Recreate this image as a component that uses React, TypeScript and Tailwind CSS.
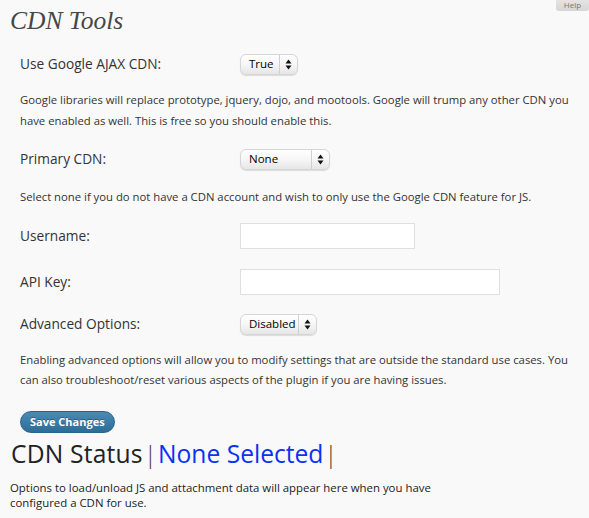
import React from "react";

const body = { fontFamily: '"Open Sans", "DejaVu Sans", sans-serif' };

const Arrows = () => (
  <svg width="7" height="11" viewBox="0 0 7 11">
    <path d="M3.5 0.5 L6.5 4.5 L0.5 4.5 Z" fill="#111" />
    <path d="M3.5 10.5 L6.5 6.5 L0.5 6.5 Z" fill="#111" />
  </svg>
);

const FakeSelect = ({ value, width }: { value: string; width: string }) => (
  <div
    className={`${width} h-[21px] flex items-center rounded-[6px] border border-[#d6d6d6] bg-gradient-to-b from-white via-[#f6f6f6] to-[#e6e6e6] shadow-[0_1px_1px_rgba(0,0,0,0.12)] text-[11.5px] text-black`}
  >
    <span className="flex-1 pl-[8px] leading-none">{value}</span>
    <span className="h-full w-[18px] border-l border-[#d0d0d0] flex items-center justify-center">
      <Arrows />
    </span>
  </div>
);

const Row = ({ label, children }: { label: string; children: React.ReactNode }) => (
  <div className="h-[42px] flex items-center">
    <div className="w-[240px] pl-[20px] text-[13.7px] text-[#333]">{label}</div>
    <div>{children}</div>
  </div>
);

export default function App() {
  return (
    <div
      className="relative w-[589px] h-[518px] bg-[#f9f9f9] overflow-hidden text-[#333]"
      style={body}
    >
      <div className="absolute top-0 right-0 w-[33px] h-[11px] rounded-b-[3px] bg-gradient-to-b from-[#e4e4e4] to-[#d6d6d6] text-[8px] leading-[10px] text-[#777] text-center">
        Help
      </div>

      <h2
        className="h-[43px] pl-[10px] pt-[3px] text-[25.5px] leading-[36px] italic text-[#464646]"
        style={{ fontFamily: '"Liberation Serif", "DejaVu Serif", serif' }}
      >
        CDN Tools
      </h2>

      <Row label="Use Google AJAX CDN:">
        <FakeSelect value="True" width="w-[58px]" />
      </Row>
      <p className="mt-[4px] px-[20px] text-[11.3px] leading-[21px]">
        Google libraries will replace prototype, jquery, dojo, and mootools. Google will trump any other CDN you
        have enabled as well. This is free so you should enable this.
      </p>

      <div className="mt-[7px]">
        <Row label="Primary CDN:">
          <FakeSelect value="None" width="w-[90px]" />
        </Row>
      </div>
      <p className="mt-[6px] px-[20px] text-[11.3px] leading-[21px]">
        Select none if you do not have a CDN account and wish to only use the Google CDN feature for JS.
      </p>

      <div className="mt-[8px]">
        <Row label="Username:">
          <input className="block w-[175px] h-[26px] bg-white border border-[#dfdfdf] outline-none" />
        </Row>
        <div className="mt-[4px]">
          <Row label="API Key:">
            <input className="block w-[260px] h-[26px] bg-white border border-[#dfdfdf] outline-none" />
          </Row>
        </div>
        <Row label="Advanced Options:">
          <FakeSelect value="Disabled" width="w-[77px]" />
        </Row>
      </div>

      <p className="mt-[5px] px-[20px] text-[11.3px] leading-[20px]">
        Enabling advanced options will allow you to modify settings that are outside the standard use cases. You
        can also troubleshoot/reset various aspects of the plugin if you are having issues.
      </p>

      <div className="mt-[18px] pl-[20px]">
        <button className="h-[22px] px-[9px] rounded-full bg-gradient-to-b from-[#4a8ab5] to-[#2c6d98] border border-[#2a6590] text-white text-[11px] font-bold leading-none [text-shadow:0_-1px_0_rgba(0,0,0,0.3)]">
          Save Changes
        </button>
      </div>

      <div className="mt-[5px] pl-[11px] h-[32px] flex items-center text-[24.6px] leading-[30px]">
        <span className="text-[#222] tracking-[0.2px]">CDN Status</span>
        <span className="mx-[1px] text-[#4a3f2a] font-light">|</span>
        <span className="text-[#0a32f5]">None Selected</span>
        <span className="mx-[1px] text-[#4a3f2a] font-light">|</span>
      </div>

      <p className="mt-[10px] pl-[10px] w-[480px] text-[11.4px] leading-[15px] text-[#222]">
        Options to load/unload JS and attachment data will appear here when you have
        <br />
        configured a CDN for use.
      </p>
    </div>
  );
}
